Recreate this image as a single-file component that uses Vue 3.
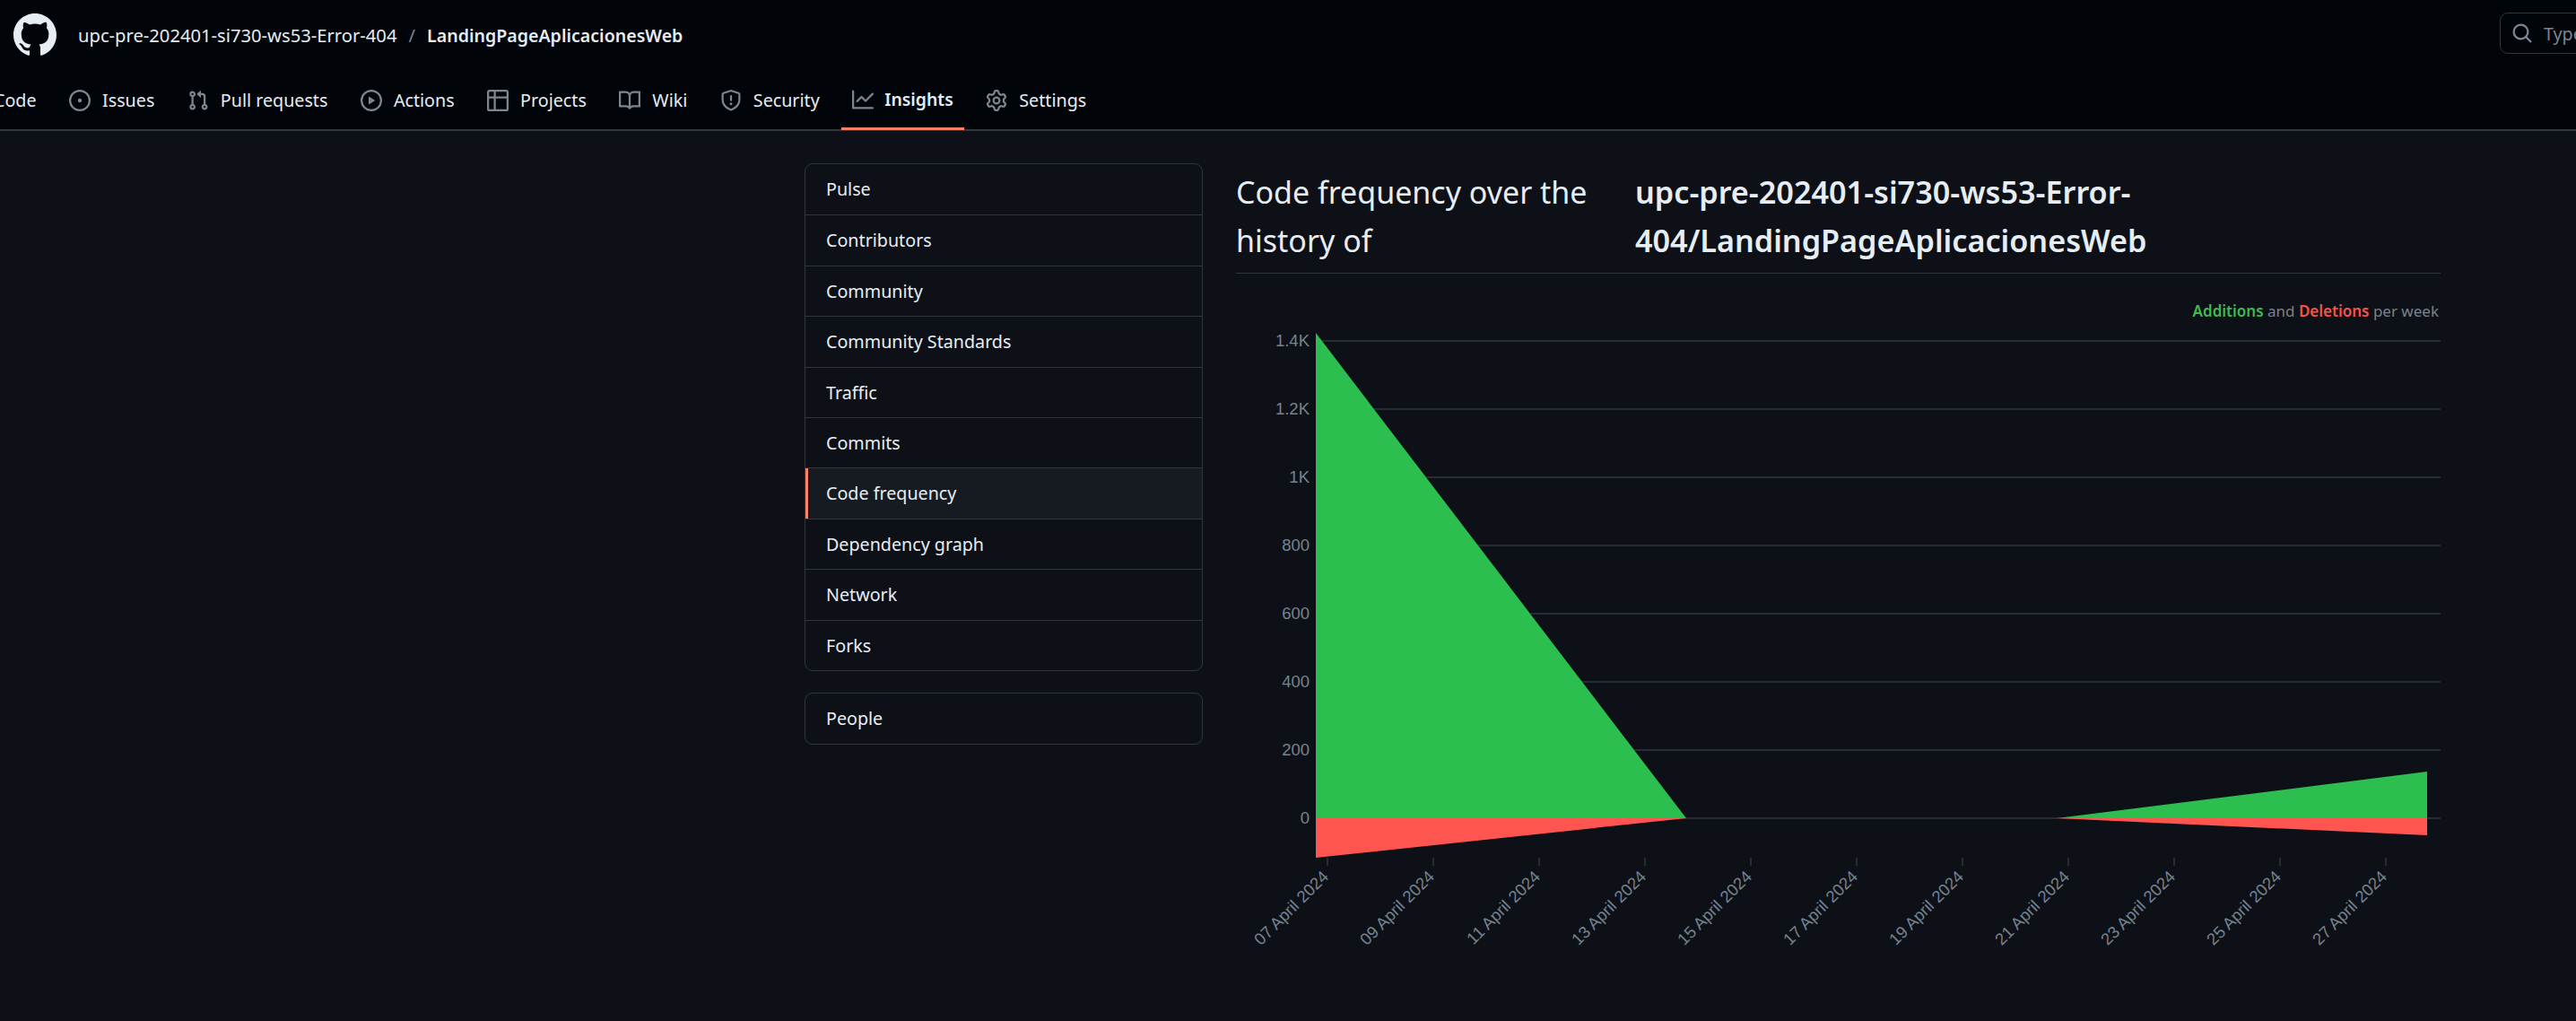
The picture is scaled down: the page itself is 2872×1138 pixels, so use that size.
<template>
  <div class="page">
    <header class="top">
      <div class="top-row">
        <svg class="logo" viewBox="0 0 16 16"><path :d="icons.github" /></svg>
        <span class="owner">upc-pre-202401-si730-ws53-Error-404</span>
        <span class="slash">/</span>
        <span class="repo">LandingPageAplicacionesWeb</span>
        <div class="search">
          <svg class="icon" viewBox="0 0 16 16"><path :d="icons.search" /></svg>
          <span>Type / to search</span>
        </div>
      </div>
      <nav class="tabs">
        <a v-for="t in tabs" :key="t.label" class="tab" :class="{ active: t.label === 'Insights' }">
          <svg class="icon" viewBox="0 0 16 16"><path :d="icons[t.icon]" /></svg>
          <span>{{ t.label }}</span>
        </a>
      </nav>
    </header>

    <main class="content">
      <aside class="side">
        <div class="menu">
          <a v-for="m in menu" :key="m" class="menu-item" :class="{ selected: m === 'Code frequency' }">{{ m }}</a>
        </div>
        <div class="menu">
          <a class="menu-item">People</a>
        </div>
      </aside>

      <section class="main">
        <h2 class="title">
          <span class="title-a">Code frequency over the history of</span>
          <strong class="title-b">upc-pre-202401-si730-ws53-Error-404/LandingPageAplicacionesWeb</strong>
        </h2>
        <p class="legend">
          <b class="add">Additions</b> and <b class="del">Deletions</b> per week
        </p>
        <svg class="chart" viewBox="1378 370 1343 700">
          <line v-for="g in grid" :key="g.label" x1="1467" x2="2721" :y1="g.y" :y2="g.y" class="grid" />
          <text v-for="g in grid" :key="'l' + g.label" x="1460" :y="g.y + 6" text-anchor="end" class="axis">{{ g.label }}</text>
          <polygon points="1467,913 1467,372 1880,913 2293,913 2706,861 2706,913" fill="#2cbe4e" />
          <polygon points="1467,913 1467,957 1880,913 2293,913 2706,932 2706,913" fill="#ff5550" />
          <g v-for="d in dates" :key="d.label">
            <line :x1="d.x" :x2="d.x" y1="957" y2="966" class="grid" />
            <text :transform="`translate(${d.x - 2} 975) rotate(-45)`" text-anchor="end" dy="6" class="axis">{{ d.label }}</text>
          </g>
        </svg>
      </section>
    </main>
  </div>
</template>

<script setup>
const icons = {
  github: 'M8 0c4.42 0 8 3.58 8 8a8.013 8.013 0 0 1-5.45 7.59c-.4.08-.55-.17-.55-.38 0-.27.01-1.13.01-2.2 0-.75-.25-1.23-.54-1.48 1.78-.2 3.65-.88 3.65-3.95 0-.88-.31-1.59-.82-2.15.08-.2.36-1.02-.08-2.12 0 0-.67-.22-2.2.82-.64-.18-1.32-.27-2-.27-.68 0-1.36.09-2 .27-1.53-1.03-2.2-.82-2.2-.82-.44 1.1-.16 1.92-.08 2.12-.51.56-.82 1.28-.82 2.15 0 3.06 1.86 3.75 3.64 3.95-.23.2-.44.55-.51 1.07-.46.21-1.61.55-2.33-.66-.15-.24-.6-.83-1.23-.82-.67.01-.27.38.01.53.34.19.73.9.82 1.13.16.45.68 1.31 2.69.94 0 .67.01 1.3.01 1.49 0 .21-.15.45-.55.38A7.995 7.995 0 0 1 0 8c0-4.42 3.58-8 8-8Z',
  search: 'M10.68 11.74a6 6 0 0 1-7.922-8.982 6 6 0 0 1 8.982 7.922l3.04 3.04a.749.749 0 0 1-.326 1.275.749.749 0 0 1-.734-.215ZM11.5 7a4.499 4.499 0 1 0-8.997 0A4.499 4.499 0 0 0 11.5 7Z',
  code: 'm11.28 3.22 4.25 4.25a.75.75 0 0 1 0 1.06l-4.25 4.25a.749.749 0 0 1-1.275-.326.749.749 0 0 1 .215-.734L13.94 8l-3.72-3.72a.749.749 0 0 1 .326-1.275.749.749 0 0 1 .734.215Zm-6.56 0a.751.751 0 0 1 1.042.018.751.751 0 0 1 .018 1.042L2.06 8l3.72 3.72a.749.749 0 0 1-.326 1.275.749.749 0 0 1-.734-.215L.47 8.53a.75.75 0 0 1 0-1.06Z',
  issue: 'M8 9.5a1.5 1.5 0 1 0 0-3 1.5 1.5 0 0 0 0 3ZM8 0a8 8 0 1 1 0 16A8 8 0 0 1 8 0ZM1.5 8a6.5 6.5 0 1 0 13 0 6.5 6.5 0 0 0-13 0Z',
  pull: 'M1.5 3.25a2.25 2.25 0 1 1 3 2.122v5.256a2.251 2.251 0 1 1-1.5 0V5.372A2.25 2.25 0 0 1 1.5 3.25Zm5.677-.177L9.573.677A.25.25 0 0 1 10 .854V2.5h1A2.5 2.5 0 0 1 13.5 5v5.628a2.251 2.251 0 1 1-1.5 0V5a1 1 0 0 0-1-1h-1v1.646a.25.25 0 0 1-.427.177L7.177 3.427a.25.25 0 0 1 0-.354ZM3.75 2.5a.75.75 0 1 0 0 1.5.75.75 0 0 0 0-1.5Zm0 9.5a.75.75 0 1 0 0 1.5.75.75 0 0 0 0-1.5Zm8.25.75a.75.75 0 1 0 1.5 0 .75.75 0 0 0-1.5 0Z',
  play: 'M8 0a8 8 0 1 1 0 16A8 8 0 0 1 8 0ZM1.5 8a6.5 6.5 0 1 0 13 0 6.5 6.5 0 0 0-13 0Zm4.879-2.773 4.264 2.559a.25.25 0 0 1 0 .428l-4.264 2.559A.25.25 0 0 1 6 10.559V5.442a.25.25 0 0 1 .379-.215Z',
  table: 'M0 1.75C0 .784.784 0 1.75 0h12.5C15.216 0 16 .784 16 1.75v12.5A1.75 1.75 0 0 1 14.25 16H1.75A1.75 1.75 0 0 1 0 14.25ZM6.5 6.5v8h7.75a.25.25 0 0 0 .25-.25V6.5Zm8-1.5V1.75a.25.25 0 0 0-.25-.25H6.5V5Zm-13 1.5v7.75c0 .138.112.25.25.25H5v-8ZM5 5V1.5H1.75a.25.25 0 0 0-.25.25V5Z',
  book: 'M0 1.75A.75.75 0 0 1 .75 1h4.253c1.227 0 2.317.59 3 1.501A3.743 3.743 0 0 1 11.006 1h4.245a.75.75 0 0 1 .75.75v10.5a.75.75 0 0 1-.75.75h-4.507a2.25 2.25 0 0 0-1.591.659l-.622.621a.75.75 0 0 1-1.06 0l-.622-.621A2.25 2.25 0 0 0 5.258 13H.75a.75.75 0 0 1-.75-.75Zm7.251 10.324.004-5.073-.002-2.253A2.25 2.25 0 0 0 5.003 2.5H1.5v9h3.757a3.75 3.75 0 0 1 1.994.574ZM8.755 4.75l-.004 7.322a3.752 3.752 0 0 1 1.992-.572H14.5v-9h-3.495a2.25 2.25 0 0 0-2.25 2.25Z',
  shield: 'M7.467.133a1.748 1.748 0 0 1 1.066 0l5.25 1.68A1.75 1.75 0 0 1 15 3.48V7c0 1.566-.32 3.182-1.303 4.682-.983 1.498-2.585 2.813-5.032 3.855a1.697 1.697 0 0 1-1.33 0c-2.447-1.042-4.049-2.357-5.032-3.855C1.32 10.182 1 8.566 1 7V3.48a1.75 1.75 0 0 1 1.217-1.667Zm.61 1.429a.25.25 0 0 0-.153 0l-5.25 1.68a.25.25 0 0 0-.174.238V7c0 1.358.275 2.666 1.057 3.86.784 1.194 2.121 2.34 4.366 3.297a.196.196 0 0 0 .154 0c2.245-.956 3.582-2.104 4.366-3.298C13.225 9.666 13.5 8.36 13.5 7V3.48a.251.251 0 0 0-.174-.237l-5.25-1.68ZM8.75 4.75v3a.75.75 0 0 1-1.5 0v-3a.75.75 0 0 1 1.5 0ZM9 10.5a1 1 0 1 1-2 0 1 1 0 0 1 2 0Z',
  graph: 'M1.5 1.75V13.5h13.75a.75.75 0 0 1 0 1.5H.75a.75.75 0 0 1-.75-.75V1.75a.75.75 0 0 1 1.5 0Zm14.28 2.53-5.25 5.25a.75.75 0 0 1-1.06 0L7 7.06 4.28 9.78a.751.751 0 0 1-1.042-.018.751.751 0 0 1-.018-1.042l3.25-3.25a.75.75 0 0 1 1.06 0L10 7.94l4.72-4.72a.751.751 0 0 1 1.042.018.751.751 0 0 1 .018 1.042Z',
  gear: 'M8 0a8.2 8.2 0 0 1 .701.031C9.444.095 9.99.645 10.16 1.29l.288 1.107c.018.066.079.158.212.224.231.114.454.243.668.386.123.082.233.09.299.071l1.103-.303c.644-.176 1.392.021 1.82.63.27.385.506.792.704 1.218.315.675.111 1.422-.364 1.891l-.814.806c-.049.048-.098.147-.088.294.016.257.016.515 0 .772-.01.147.038.246.088.294l.814.806c.475.469.679 1.216.364 1.891a7.977 7.977 0 0 1-.704 1.217c-.428.61-1.176.807-1.82.63l-1.102-.302c-.067-.019-.177-.011-.3.071a5.909 5.909 0 0 1-.668.386c-.133.066-.194.158-.211.224l-.29 1.106c-.168.646-.715 1.196-1.458 1.26a8.006 8.006 0 0 1-1.402 0c-.743-.064-1.289-.614-1.458-1.26l-.289-1.106c-.018-.066-.079-.158-.212-.224a5.738 5.738 0 0 1-.668-.386c-.123-.082-.233-.09-.299-.071l-1.103.303c-.644.176-1.392-.021-1.82-.63a8.12 8.12 0 0 1-.704-1.218c-.315-.675-.111-1.422.363-1.891l.815-.806c.05-.048.098-.147.088-.294a6.214 6.214 0 0 1 0-.772c.01-.147-.038-.246-.088-.294l-.815-.806C.635 6.045.431 5.298.746 4.623a7.92 7.92 0 0 1 .704-1.217c.428-.61 1.176-.807 1.82-.63l1.102.302c.067.019.177.011.3-.071.214-.143.437-.272.668-.386.133-.066.194-.158.211-.224l.29-1.106C6.009.645 6.556.095 7.299.03 7.531.01 7.765 0 8 0Zm-.571 1.525c-.036.003-.108.036-.137.146l-.289 1.105c-.147.561-.549.967-.998 1.189-.173.086-.34.183-.5.29-.417.278-.97.423-1.529.27l-1.103-.303c-.109-.03-.175.016-.195.045-.22.312-.412.644-.573.99-.014.031-.021.11.059.19l.815.806c.411.406.562.957.53 1.456a4.709 4.709 0 0 0 0 .582c.032.499-.119 1.05-.53 1.456l-.815.806c-.081.08-.073.159-.059.19.162.346.353.677.573.989.02.03.085.076.195.046l1.102-.303c.56-.153 1.113-.008 1.53.27.161.107.328.204.501.29.447.222.85.629.997 1.189l.289 1.105c.029.109.101.143.137.146a6.6 6.6 0 0 0 1.142 0c.036-.003.108-.036.137-.146l.289-1.105c.147-.561.549-.967.998-1.189.173-.086.34-.183.5-.29.417-.278.97-.423 1.529-.27l1.103.303c.109.029.175-.016.195-.045.22-.313.411-.644.573-.99.014-.031.021-.11-.059-.19l-.815-.806c-.411-.406-.562-.957-.53-1.456a4.709 4.709 0 0 0 0-.582c-.032-.499.119-1.05.53-1.456l.815-.806c.081-.08.073-.159.059-.19a6.464 6.464 0 0 0-.573-.989c-.02-.03-.085-.076-.195-.046l-1.102.303c-.56.153-1.113.008-1.53-.27a4.44 4.44 0 0 0-.501-.29c-.447-.222-.85-.629-.997-1.189l-.289-1.105c-.029-.11-.101-.143-.137-.146a6.6 6.6 0 0 0-1.142 0ZM11 8a3 3 0 1 1-6 0 3 3 0 0 1 6 0ZM9.5 8a1.5 1.5 0 1 0-3.001.001A1.5 1.5 0 0 0 9.5 8Z'
}

const tabs = [
  { label: 'Code', icon: 'code' },
  { label: 'Issues', icon: 'issue' },
  { label: 'Pull requests', icon: 'pull' },
  { label: 'Actions', icon: 'play' },
  { label: 'Projects', icon: 'table' },
  { label: 'Wiki', icon: 'book' },
  { label: 'Security', icon: 'shield' },
  { label: 'Insights', icon: 'graph' },
  { label: 'Settings', icon: 'gear' }
]

const menu = [
  'Pulse',
  'Contributors',
  'Community',
  'Community Standards',
  'Traffic',
  'Commits',
  'Code frequency',
  'Dependency graph',
  'Network',
  'Forks'
]

const grid = ['1.4K', '1.2K', '1K', '800', '600', '400', '200', '0'].map((label, i) => ({
  label,
  y: 381 + i * 76
}))

const dates = [7, 9, 11, 13, 15, 17, 19, 21, 23, 25, 27].map((day, i) => ({
  label: `${String(day).padStart(2, '0')} April 2024`,
  x: 1480 + i * 118
}))
</script>

<style>
html, body {
  margin: 0;
  background: #0d1117;
}
</style>

<style scoped>
.page {
  width: 2872px;
  height: 1138px;
  overflow: hidden;
  background: #0d1117;
  color: #e6edf3;
  font-family: "Noto Sans", "Open Sans", sans-serif;
  font-size: 19.7px;
}

.top {
  height: 144px;
  background: #010409;
  border-bottom: 2px solid #30363d;
  position: relative;
}

.top-row {
  height: 78px;
  display: flex;
  align-items: center;
  padding-left: 15px;
}

.logo {
  width: 48px;
  height: 48px;
  fill: #e6edf3;
  margin-right: 24px;
}

.owner {
  font-size: 20.2px;
}

.slash {
  color: #7d8590;
  margin: 0 13px;
  font-size: 20.2px;
}

.repo {
  font-weight: 600;
  font-size: 19.6px;
}

.search {
  position: absolute;
  left: 2787px;
  top: 14px;
  width: 300px;
  height: 46px;
  box-sizing: border-box;
  border: 1px solid #30363d;
  border-radius: 9px;
  display: flex;
  align-items: center;
  gap: 12px;
  padding-left: 12px;
  color: #7d8590;
}

.icon {
  width: 24px;
  height: 24px;
  fill: #7d8590;
  flex: none;
}

.tabs {
  display: flex;
  gap: 12.5px;
  margin-left: -56px;
  height: 66px;
}

.tab {
  display: flex;
  align-items: center;
  gap: 13px;
  padding: 1px 12px 0;
  height: 66px;
  box-sizing: border-box;
}

.tab.active {
  font-weight: 600;
  font-size: 19.4px;
  border-bottom: 3px solid #f78166;
  height: 67px;
  gap: 12px;
}

.content {
  display: flex;
  gap: 37px;
  padding: 36px 0 0 897px;
}

.side {
  width: 444px;
  flex: none;
  display: flex;
  flex-direction: column;
  gap: 24px;
}

.menu {
  border: 1px solid #30363d;
  border-radius: 9px;
  overflow: hidden;
}

.menu-item {
  display: block;
  height: 56.4px;
  line-height: 56px;
  box-sizing: border-box;
  padding-left: 23px;
  border-top: 1px solid #30363d;
}

.menu-item:first-child {
  border-top: 0;
}

.menu-item.selected {
  background: #161b22;
  box-shadow: inset 3px 0 0 #f78166;
}

.main {
  width: 1343px;
  flex: none;
}

.title {
  margin: 0;
  display: flex;
  gap: 36px;
  font-size: 34px;
  line-height: 54px;
  font-weight: 400;
  height: 123px;
  padding-top: 5px;
  box-sizing: border-box;
  border-bottom: 1px solid #30363d;
}

.title-a {
  width: 409px;
  flex: none;
}

.title-b {
  width: 600px;
  font-weight: 600;
  font-size: 34.2px;
}

.legend {
  margin: 0;
  height: 64px;
  line-height: 84px;
  font-size: 17px;
  text-align: right;
  padding-right: 2px;
  color: #768390;
}

.legend b {
  font-weight: 600;
}

.add {
  color: #3fb950;
}

.del {
  color: #f85149;
}

.chart {
  display: block;
  width: 1343px;
  height: 700px;
}

.grid {
  stroke: #30363d;
  stroke-width: 1.5;
}

.axis {
  fill: #768390;
  font-family: "Liberation Sans", Arial, sans-serif;
  font-size: 18.5px;
}
</style>
